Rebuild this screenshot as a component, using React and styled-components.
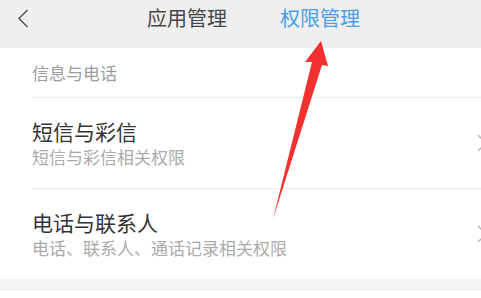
import styled, { createGlobalStyle } from 'styled-components';

const GlobalStyle = createGlobalStyle`
	html, body {
		margin: 0;
		padding: 0;
		background: #fff;
	}
	body {
		font-family: 'Noto Sans CJK SC', 'Noto Sans', sans-serif;
		overflow: hidden;
	}
`;

const items = [
	{ title: '短信与彩信', desc: '短信与彩信相关权限' },
	{ title: '电话与联系人', desc: '电话、联系人、通话记录相关权限' },
];

const App = () => {
	return (
		<>
			<GlobalStyle />
			<Page>
				<Header>
					<BackButton>
						<svg width='12' height='19' viewBox='0 0 12 19'>
							<path d='M10.5 1 L2 9.5 L10.5 18' fill='none' stroke='#5a5a5a' strokeWidth='1.6' />
						</svg>
					</BackButton>
					<Tabs>
						<Tab>应用管理</Tab>
						<Tab active>权限管理</Tab>
					</Tabs>
				</Header>
				<SectionLabel>信息与电话</SectionLabel>
				<List>
					{items.map((item) => (
						<Item key={item.title}>
							<ItemText>
								<ItemTitle>{item.title}</ItemTitle>
								<ItemDesc>{item.desc}</ItemDesc>
							</ItemText>
							<Chevron width='10' height='18' viewBox='0 0 10 18'>
								<path d='M1 1 L9 9 L1 17' fill='none' stroke='#b8b8b8' strokeWidth='1.5' />
							</Chevron>
						</Item>
					))}
				</List>
				<Gap />
				<Footer />
				<Arrow width='481' height='298' viewBox='0 0 481 298'>
					<polygon points='321,41 328,66 322,65 273,219 312,62 305,62' fill='#f2302e' />
				</Arrow>
			</Page>
		</>
	);
};

export default App;

const Page = styled.div`
	position: relative;
	width: 481px;
	height: 298px;
	overflow: hidden;
	background: #fff;
`;

const Header = styled.div`
	display: flex;
	align-items: center;
	height: 48px;
	background: #efefef;
	padding: 0 0 12px 17px;
	box-sizing: border-box;
`;

const BackButton = styled.div`
	display: flex;
	align-items: center;
	width: 12px;
	height: 19px;
`;

const Tabs = styled.div`
	display: flex;
	gap: 53px;
	margin-left: 118px;
`;

const Tab = styled.div`
	font-size: 20px;
	line-height: 28px;
	color: ${(props) => (props.active ? '#4a9ee6' : '#474747')};
`;

const SectionLabel = styled.div`
	display: flex;
	align-items: center;
	height: 49px;
	padding-left: 32px;
	font-size: 17px;
	color: #9c9c9c;
	box-sizing: border-box;
`;

const List = styled.div`
	margin-left: 32px;
`;

const Item = styled.div`
	display: flex;
	align-items: center;
	justify-content: space-between;
	height: 91px;
	border-top: 1px solid #ececec;
	box-sizing: border-box;
`;

const ItemText = styled.div`
	display: flex;
	flex-direction: column;
`;

const ItemTitle = styled.div`
	font-size: 21px;
	line-height: 28px;
	color: #333;
`;

const ItemDesc = styled.div`
	font-size: 17px;
	line-height: 24px;
	color: #ababab;
`;

const Chevron = styled.svg`
	margin-right: -6px;
	flex-shrink: 0;
`;

const Gap = styled.div`
	height: 10px;
	background: #f4f4f4;
`;

const Footer = styled.div`
	height: 20px;
	border-top: 1px solid #e9e9e9;
	background: #fff;
`;

const Arrow = styled.svg`
	position: absolute;
	top: 0;
	left: 0;
	pointer-events: none;
`;
